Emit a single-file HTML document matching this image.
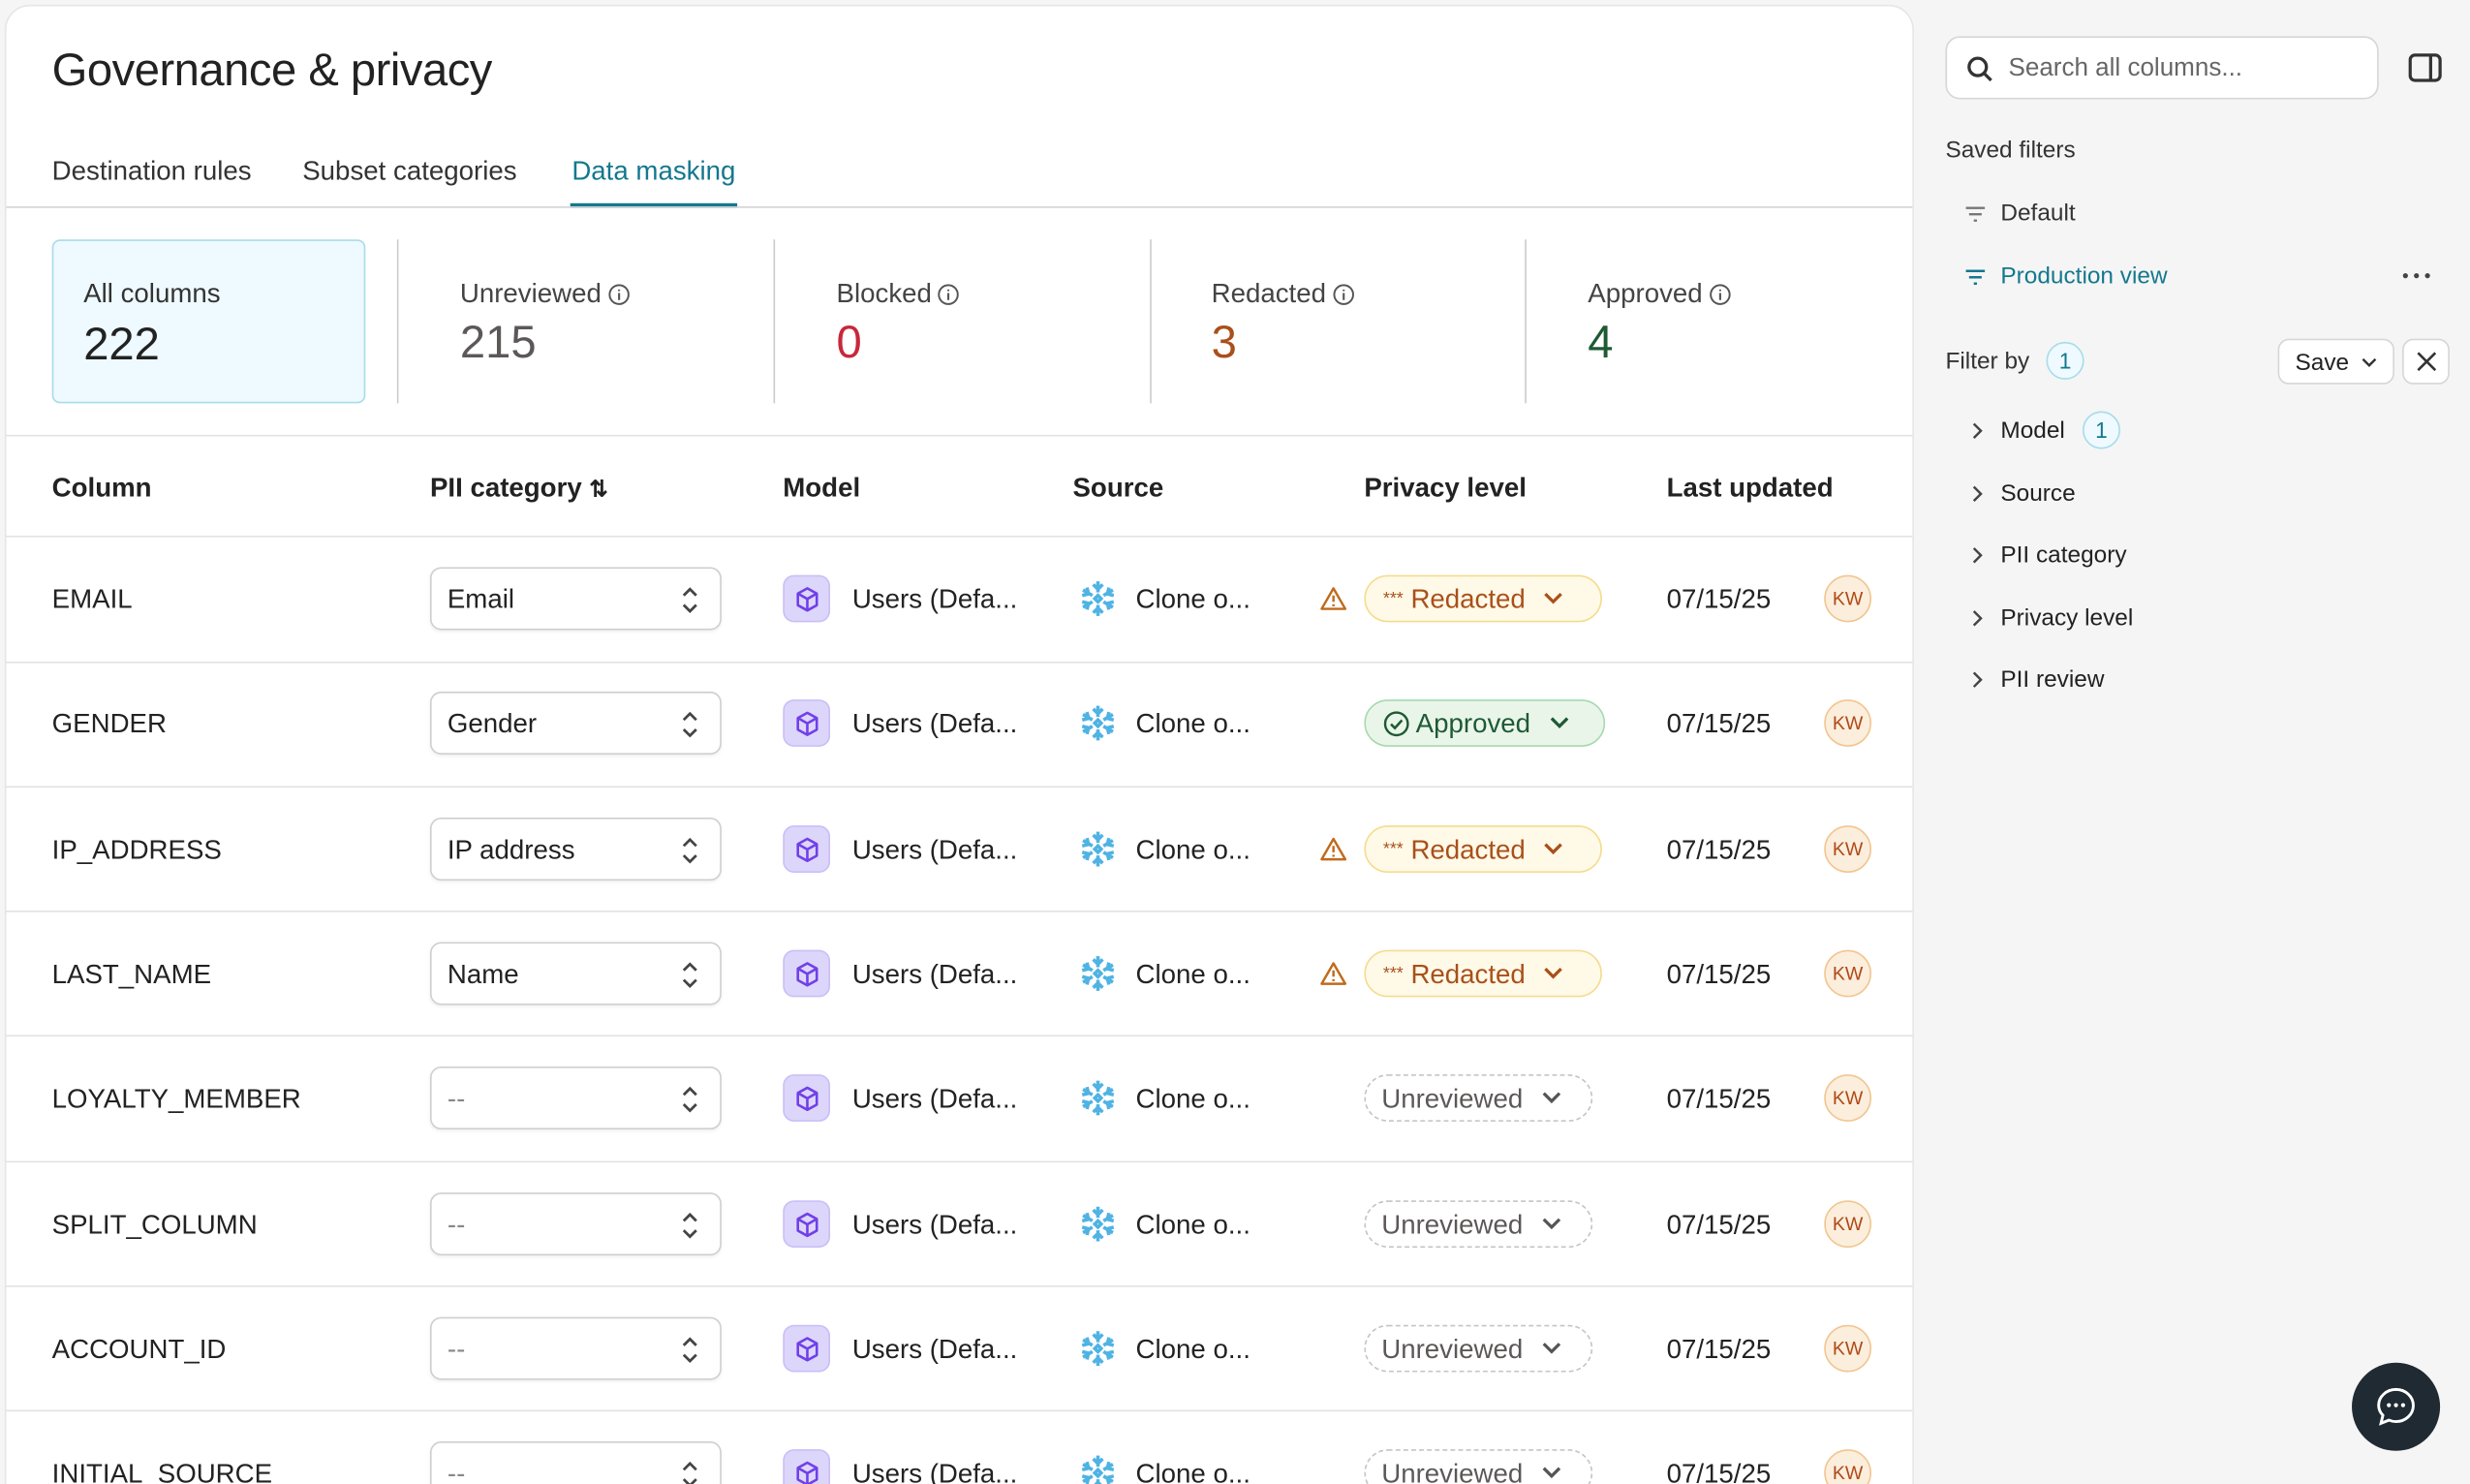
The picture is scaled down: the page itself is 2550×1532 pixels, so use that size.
<!DOCTYPE html>
<html><head><meta charset="utf-8">
<style>
*{box-sizing:border-box;margin:0;padding:0}
html,body{width:2550px;height:1532px;overflow:hidden;background:#f5f5f5}
#w{position:absolute;left:0;top:0;width:1568px;height:942px;overflow:hidden;transform:scale(1.62628);transform-origin:0 0;font-family:"Liberation Sans",sans-serif;color:#2a2a2a;background:#f5f5f5}
.a{position:absolute}
.card{left:3px;top:3px;width:1212px;height:960px;background:#fff;border:1px solid #e6e6e6;border-radius:16px;overflow:hidden}
.t{font-size:17px;white-space:nowrap;line-height:1}
.hl{position:absolute;left:0;width:1212px;height:1px;background:#e2e2e2}
.stat{position:absolute;top:148px;height:104px;width:200px}
.stat .l{position:absolute;left:20px;top:25px;font-size:17px;color:#444;white-space:nowrap}
.stat .l svg{vertical-align:-2px;margin-left:4px}
.stat .n{position:absolute;left:20px;top:50px;font-size:29px}
.vd{position:absolute;top:148px;width:1px;height:104px;background:#ccc}
.sel{position:absolute;left:269px;width:185px;height:40px;border:1px solid #cfcfcf;border-radius:7px;box-shadow:0 1px 2px rgba(0,0,0,.06)}
.sel span{position:absolute;left:10px;top:11px;font-size:17px;line-height:1}
.sel svg{position:absolute;right:14px;top:11px}
.mi{position:absolute;left:493px;width:30px;height:30px;border-radius:7px;background:#ddd6fb;border:1px solid #c9bff7}
.pill{position:absolute;left:862px;height:30px;border-radius:15px;font-size:17px;line-height:1;white-space:nowrap}
.av{position:absolute;left:1154px;width:30px;height:30px;border-radius:50%;background:#fbeedd;border:1px solid #f2c58f;color:#b04a16;font-size:12px;text-align:center;line-height:28px}
.side .t{font-size:15px}
</style></head><body><div id="w">
<div class="a card">
 <div class="a t" style="left:29px;top:27px;font-size:29px;color:#222;letter-spacing:-.3px">Governance &amp; privacy</div>
 <div class="a t" style="left:29px;top:96px;color:#333">Destination rules</div>
 <div class="a t" style="left:188px;top:96px;color:#333">Subset categories</div>
 <div class="a t" style="left:359px;top:96px;color:#14788e">Data masking</div>
 <div class="a" style="left:358px;top:125px;width:106px;height:3px;background:#14788e"></div>
 <div class="hl" style="top:127px;background:#d4d4d4"></div>

 <div class="stat" style="left:29px;width:199px;background:#eefaff;border:1px solid #a8dce8;border-radius:5px"><div class="l" style="left:19px;top:24px;color:#333">All columns</div><div class="n" style="left:19px;color:#222">222</div></div>
 <div class="vd" style="left:248px"></div>
 <div class="stat" style="left:268px"><div class="l">Unreviewed<svg width="14" height="14"><circle cx="7" cy="7" r="6" fill="none" stroke="#555" stroke-width="1.2"/><path d="M7 6v4.5M7 3.8v1" stroke="#555" stroke-width="1.3"/></svg></div><div class="n" style="color:#5c5858">215</div></div>
 <div class="vd" style="left:487px"></div>
 <div class="stat" style="left:507px"><div class="l">Blocked<svg width="14" height="14"><circle cx="7" cy="7" r="6" fill="none" stroke="#555" stroke-width="1.2"/><path d="M7 6v4.5M7 3.8v1" stroke="#555" stroke-width="1.3"/></svg></div><div class="n" style="color:#c8283c">0</div></div>
 <div class="vd" style="left:726px"></div>
 <div class="stat" style="left:745px"><div class="l">Redacted<svg width="14" height="14"><circle cx="7" cy="7" r="6" fill="none" stroke="#555" stroke-width="1.2"/><path d="M7 6v4.5M7 3.8v1" stroke="#555" stroke-width="1.3"/></svg></div><div class="n" style="color:#a9501a">3</div></div>
 <div class="vd" style="left:964px"></div>
 <div class="stat" style="left:984px"><div class="l">Approved<svg width="14" height="14"><circle cx="7" cy="7" r="6" fill="none" stroke="#555" stroke-width="1.2"/><path d="M7 6v4.5M7 3.8v1" stroke="#555" stroke-width="1.3"/></svg></div><div class="n" style="color:#1e5a34">4</div></div>
 <div class="hl" style="top:272px"></div>

 <div class="a t" style="left:29px;top:297px;font-weight:bold;color:#222">Column</div>
 <div class="a t" style="left:269px;top:297px;font-weight:bold;color:#222">PII category <span style="font-size:14px">⇅</span></div>
 <div class="a t" style="left:493px;top:297px;font-weight:bold;color:#222">Model</div>
 <div class="a t" style="left:677px;top:297px;font-weight:bold;color:#222">Source</div>
 <div class="a t" style="left:862px;top:297px;font-weight:bold;color:#222">Privacy level</div>
 <div class="a t" style="left:1054px;top:297px;font-weight:bold;color:#222">Last updated</div>
 <div class="hl" style="top:336px"></div>
 <div id="rows"></div>
</div>

<div class="side">
 <div class="a" style="left:1235px;top:23px;width:275px;height:40px;background:#fff;border:1px solid #d6d6d6;border-radius:9px">
  <svg class="a" style="left:12px;top:11px" width="18" height="18" viewBox="0 0 18 18"><circle cx="7.5" cy="7.5" r="5.5" fill="none" stroke="#333" stroke-width="2"/><path d="M11.5 11.5L16 16" stroke="#333" stroke-width="2"/></svg>
  <div class="a t" style="left:39px;top:12px;font-size:16px;color:#666">Search all columns...</div>
 </div>
 <svg class="a" style="left:1529px;top:33px" width="22" height="20" viewBox="0 0 22 20"><rect x="1" y="2" width="19" height="16" rx="3" fill="none" stroke="#333" stroke-width="2"/><path d="M14 2v16" stroke="#333" stroke-width="2"/></svg>
 <div class="a t" style="left:1235px;top:88px;color:#333">Saved filters</div>
 <svg class="a" style="left:1247px;top:130px" width="14" height="12"><path d="M1 2h12M3 6h8M6 10h2" stroke="#777" stroke-width="1.5"/></svg>
 <div class="a t" style="left:1270px;top:128px;color:#333">Default</div>
 <svg class="a" style="left:1247px;top:170px" width="14" height="12"><path d="M1 2h12M3 6h8M6 10h2" stroke="#14788e" stroke-width="1.5"/></svg>
 <div class="a t" style="left:1270px;top:168px;color:#14788e">Production view</div>
 <svg class="a" style="left:1525px;top:173px" width="20" height="4"><circle cx="2" cy="2" r="1.6" fill="#444"/><circle cx="9" cy="2" r="1.6" fill="#444"/><circle cx="16" cy="2" r="1.6" fill="#444"/></svg>
 <div class="a t" style="left:1235px;top:222px;color:#333">Filter by</div>
 <div class="a" style="left:1299px;top:217px;width:24px;height:24px;border-radius:12px;background:#eefaff;border:1px solid #a8dce8;color:#14788e;font-size:14px;text-align:center;line-height:22px">1</div>
 <div class="a" style="left:1446px;top:215px;width:74px;height:29px;background:#fff;border:1px solid #d6d6d6;border-radius:7px"><span class="a t" style="left:10px;top:7px;font-size:15px;color:#222">Save</span><svg class="a" style="left:52px;top:11px" width="10" height="7"><path d="M1 1l4 4 4-4" fill="none" stroke="#333" stroke-width="1.5"/></svg></div>
 <div class="a" style="left:1525px;top:215px;width:30px;height:29px;background:#fff;border:1px solid #d6d6d6;border-radius:7px"><svg class="a" style="left:8px;top:7px" width="13" height="13"><path d="M1 1l11 11M12 1L1 12" stroke="#333" stroke-width="1.6"/></svg></div>
 <div id="fl"></div>
</div>

<div class="a" style="left:1493px;top:865px;width:56px;height:56px;border-radius:50%;background:#1f2a33">
 <svg class="a" style="left:14px;top:14px" width="28" height="28" viewBox="0 0 28 28"><path d="M14 3C8 3 3 7.5 3 13c0 2.5 1 4.7 2.7 6.4L4.5 24.5l5-2c1.4.6 2.9.9 4.5.9 6 0 11-4.5 11-10.2S20 3 14 3z" fill="none" stroke="#fff" stroke-width="1.8"/><circle cx="9.5" cy="13" r="1.3" fill="#fff"/><circle cx="14" cy="13" r="1.3" fill="#fff"/><circle cx="18.5" cy="13" r="1.3" fill="#fff"/></svg>
</div>
</div>
<script>
var R=[["EMAIL","Email","r"],["GENDER","Gender","a"],["IP_ADDRESS","IP address","r"],["LAST_NAME","Name","r"],["LOYALTY_MEMBER","--","u"],["SPLIT_COLUMN","--","u"],["ACCOUNT_ID","--","u"],["INITIAL_SOURCE","--","u"]];
var h="";
var snow='<svg width="24" height="24" viewBox="0 0 24 24" stroke="#4fb3e3" stroke-width="2.2" fill="none"><path d="M12 1v7M9 3l3 3 3-3M12 23v-7M9 21l3-3 3 3M2.5 6.5l6 3.5M2 10l4-1-1-4M21.5 6.5l-6 3.5M22 10l-4-1 1-4M2.5 17.5l6-3.5M2 14l4 1-1 4M21.5 17.5l-6-3.5M22 14l-4 1 1 4"/><path d="M12 10l2 2-2 2-2-2z"/></svg>';
var chev=function(c){return '<svg width="12" height="8" style="margin-left:12px;vertical-align:2px"><path d="M1 1l5 5 5-5" fill="none" stroke="'+c+'" stroke-width="2"/></svg>'};
for(var i=0;i<R.length;i++){var c=376+i*79.3,r=R[i];
h+='<div class="a t" style="left:29px;top:'+(c-8)+'px;color:#222">'+r[0]+'</div>';
h+='<div class="sel" style="top:'+(c-20)+'px"><span style="color:'+(r[1]=="--"?"#888":"#222")+'">'+r[1]+'</span><svg width="10" height="18"><path d="M1 6l4-4 4 4M1 12l4 4 4-4" fill="none" stroke="#444" stroke-width="1.7"/></svg></div>';
h+='<div class="mi" style="top:'+(c-15)+'px"><svg style="position:absolute;left:6px;top:6px" width="17" height="17" viewBox="0 0 17 17"><path d="M8.5 1.5l6 3.3v7.4l-6 3.3-6-3.3V4.8zM2.5 4.8l6 3.4 6-3.4M8.5 8.2v7.3" fill="none" stroke="#7040e8" stroke-width="1.6" stroke-linejoin="round"/></svg></div>';
h+='<div class="a t" style="left:537px;top:'+(c-8)+'px;color:#222">Users (Defa...</div>';
h+='<div class="a" style="left:681px;top:'+(c-12)+'px">'+snow+'</div>';
h+='<div class="a t" style="left:717px;top:'+(c-8)+'px;color:#222">Clone o...</div>';
if(r[2]=="r"){h+='<svg class="a" style="left:834px;top:'+(c-8)+'px" width="17" height="16"><path d="M8.5 1.5L16 14.5H1z" fill="none" stroke="#c06a1c" stroke-width="1.5" stroke-linejoin="round"/><path d="M8.5 6v4M8.5 11.6v1.3" stroke="#c06a1c" stroke-width="1.5"/></svg>';
h+='<div class="pill" style="top:'+(c-15)+'px;width:151px;background:#fff9e8;border:1px solid #f4dc8e;color:#a9501a;padding:6px 0 0 11px"><span style="font-size:11px;vertical-align:3px">***</span> Redacted'+chev("#a9501a")+'</div>';}
else if(r[2]=="a"){h+='<div class="pill" style="top:'+(c-15)+'px;width:153px;background:#eaf5ea;border:1px solid #a6d9ae;color:#1e5a34;padding:6px 0 0 11px"><svg width="17" height="17" style="vertical-align:-3px"><circle cx="8.5" cy="8.5" r="7.2" fill="none" stroke="#1e5a34" stroke-width="1.5"/><path d="M5 8.7l2.5 2.5 4.5-5" fill="none" stroke="#1e5a34" stroke-width="1.6"/></svg> Approved'+chev("#1e5a34")+'</div>';}
else{h+='<div class="pill" style="top:'+(c-15)+'px;width:145px;border:1.5px dashed #c4c4c4;color:#5c5858;padding:6px 0 0 10px">Unreviewed'+chev("#555")+'</div>';}
h+='<div class="a t" style="left:1054px;top:'+(c-8)+'px;color:#222">07/15/25</div>';
h+='<div class="av" style="top:'+(c-15)+'px">KW</div>';
if(i<7)h+='<div class="hl" style="top:'+(c+39.5)+'px"></div>';
}
document.getElementById("rows").innerHTML=h;
var F=["Model","Source","PII category","Privacy level","PII review"],g="";
for(var j=0;j<5;j++){var y=273+j*39.5;
g+='<svg class="a" style="left:1252px;top:'+(y-5)+'px" width="7" height="11"><path d="M1 1l4.5 4.5L1 10" fill="none" stroke="#444" stroke-width="1.5"/></svg>';
g+='<div class="a t" style="left:1270px;top:'+(y-7)+'px;color:#222">'+F[j]+'</div>';}
g+='<div class="a" style="left:1322px;top:261px;width:24px;height:24px;border-radius:12px;background:#eefaff;border:1px solid #a8dce8;color:#14788e;font-size:14px;text-align:center;line-height:22px">1</div>';
document.getElementById("fl").innerHTML=g;
</script>
</body></html>
